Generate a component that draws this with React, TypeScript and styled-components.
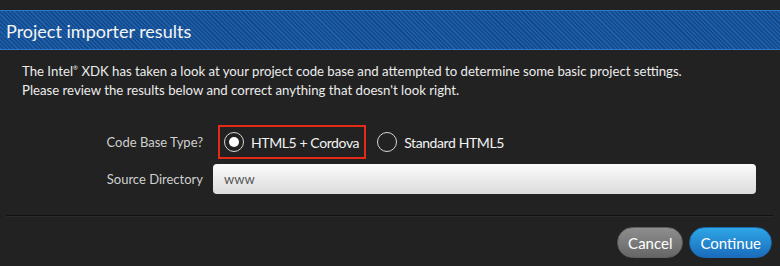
import React, { useState } from "react";
import styled, { createGlobalStyle } from "styled-components";

const GlobalStyle = createGlobalStyle`
  html, body {
    margin: 0;
    padding: 0;
    background: #222222;
  }
  body {
    font-family: Lato, "Open Sans", sans-serif;
    color: #e8e8e8;
  }
`;

const options = [
  { id: "cordova", label: "HTML5 + Cordova" },
  { id: "standard", label: "Standard HTML5" },
];

const App = () => {
  const [selected, setSelected] = useState("cordova");
  const [sourceDir, setSourceDir] = useState("www");

  return (
    <>
      <GlobalStyle />
      <Dialog>
        <Header>
          <Title>Project importer results</Title>
        </Header>
        <Intro>
          The Intel<sup>®</sup> XDK has taken a look at your project code base and attempted to determine some basic project settings.
          <br />
          Please review the results below and correct anything that doesn't look right.
        </Intro>
        <Form>
          <Label>Code Base Type?</Label>
          <RadioGroup>
            {options.map((opt) => (
              <RadioOption
                key={opt.id}
                $highlight={opt.id === "cordova"}
                onClick={() => setSelected(opt.id)}
              >
                <RadioCircle $checked={selected === opt.id} />
                <RadioText>{opt.label}</RadioText>
              </RadioOption>
            ))}
          </RadioGroup>
          <Label>Source Directory</Label>
          <TextInput value={sourceDir} onChange={(e) => setSourceDir(e.target.value)} />
        </Form>
        <Divider />
        <Footer>
          <Button $variant="cancel">Cancel</Button>
          <Button $variant="primary">Continue</Button>
        </Footer>
      </Dialog>
    </>
  );
};

export default App;

const Dialog = styled.div`
  width: 780px;
  height: 266px;
  padding-top: 10px;
  box-sizing: border-box;
  overflow: hidden;
`;

const Header = styled.div`
  height: 40px;
  box-sizing: border-box;
  border-top: 1px solid #2b78cc;
  border-bottom: 1px solid #2b78cc;
  background-color: #1a57a0;
  background-image: repeating-linear-gradient(
    45deg,
    #1d5eaa 0px,
    #1d5eaa 1.5px,
    #154a8a 1.5px,
    #154a8a 3px
  );
  display: flex;
  align-items: center;
  padding: 0 6px;
`;

const Title = styled.h1`
  margin: 0;
  font-size: 18px;
  font-weight: 400;
  color: #f4f4f4;
  padding-top: 2px;
`;

const Intro = styled.p`
  margin: 12px 0 0 22px;
  font-size: 13.2px;
  line-height: 19px;
  color: #ececec;

  sup {
    font-size: 6px;
    vertical-align: 6px;
    line-height: 0;
  }
`;

const Form = styled.div`
  display: grid;
  grid-template-columns: 203px 543px;
  column-gap: 10px;
  row-gap: 5px;
  align-items: center;
  margin-top: 25px;
`;

const Label = styled.div`
  text-align: right;
  font-size: 13px;
  color: #cfcfcf;
`;

const RadioGroup = styled.div`
  display: flex;
  align-items: center;
  gap: 10px;
  margin-left: 5px;
`;

const RadioOption = styled.div<{ $highlight: boolean }>`
  display: flex;
  align-items: center;
  gap: 7px;
  height: 34px;
  box-sizing: border-box;
  padding: 0 5px 0 4px;
  border: 2px solid ${(p) => (p.$highlight ? "#e42b17" : "transparent")};
  cursor: pointer;
  margin-left: ${(p) => (p.$highlight ? "0" : "-5px")};
`;

const RadioCircle = styled.span<{ $checked: boolean }>`
  width: 20px;
  height: 20px;
  box-sizing: border-box;
  border-radius: 50%;
  border: 1.5px solid #d8d8d8;
  display: flex;
  align-items: center;
  justify-content: center;

  &::after {
    content: "";
    width: 10px;
    height: 10px;
    border-radius: 50%;
    background: #ffffff;
    display: ${(p) => (p.$checked ? "block" : "none")};
  }
`;

const RadioText = styled.span`
  font-size: 14px;
  letter-spacing: -0.4px;
  color: #f2f2f2;
`;

const TextInput = styled.input`
  height: 30px;
  box-sizing: border-box;
  border: none;
  border-radius: 4px;
  background: linear-gradient(#fbfbfb, #dcdcdc);
  padding: 0 11px;
  font-family: Lato, "Open Sans", sans-serif;
  font-size: 13px;
  color: #555;
  outline: none;
`;

const Divider = styled.div`
  margin: 21px 7px 0 6px;
  height: 1px;
  background: #121212;
  border-bottom: 1px solid #2a2a2a;
`;

const Footer = styled.div`
  display: flex;
  justify-content: flex-end;
  gap: 6px;
  padding: 10px 8px 0 0;
`;

const Button = styled.button<{ $variant: "cancel" | "primary" }>`
  height: 31px;
  padding: 0 10px;
  border-radius: 16px;
  border: 1px solid ${(p) => (p.$variant === "primary" ? "#1a6bb0" : "#5f5f5f")};
  background: ${(p) =>
    p.$variant === "primary"
      ? "linear-gradient(#2ea6e6, #1a6cbc)"
      : "linear-gradient(#8e8e8e, #666666)"};
  color: #ffffff;
  font-family: Lato, "Open Sans", sans-serif;
  font-size: 15px;
  cursor: pointer;
`;
